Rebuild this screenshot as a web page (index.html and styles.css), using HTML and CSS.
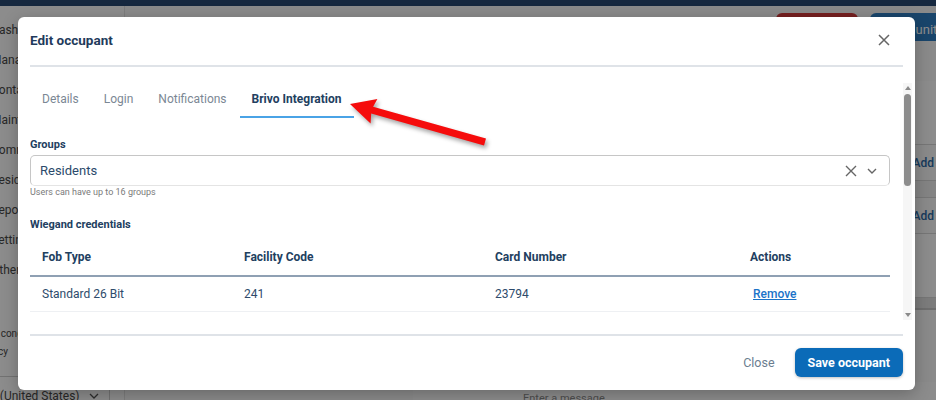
FILE: index.html
```html
<!DOCTYPE html>
<html lang="en">
<head>
  <meta charset="UTF-8" />
  <title>Unit - Edit occupant</title>
  <link rel="stylesheet" href="styles.css">
</head>
<body>

  <div class="page">
    <div class="topbar"></div>
    <div class="page-body">
      <aside class="sidebar">
        <nav class="nav">
          <a>Dashboard</a>
          <a>Management</a>
          <a>Contacts</a>
          <a>Maintenance</a>
          <a>Community</a>
          <a>Residents</a>
          <a>Reports</a>
          <a>Settings</a>
          <a>Other</a>
        </nav>
        <div class="sidebar-links">
          <a>Terms and conditions</a>
          <a class="policy">Privacy policy</a>
        </div>
        <div class="lang-select">
          <span>English (United States)</span>
          <svg width="10" height="6" viewBox="0 0 10 6"><path d="M1 1l4 4 4-4" fill="none" stroke="#555" stroke-width="1.3"/></svg>
        </div>
      </aside>

      <main class="main">
        <div class="toolbar">
          <button class="btn-danger">Delete unit</button>
          <button class="btn-primary">Edit unit codes</button>
        </div>
        <div class="unit-panel">
          <div class="panel-row tall"></div>
          <div class="panel-row"><a class="add-link">Add</a></div>
          <div class="panel-row thin"></div>
          <div class="panel-row"><a class="add-link">Add</a></div>
          <div class="panel-row tall"></div>
          <div class="panel-row band"></div>
        </div>
        <div class="composer">
          <div class="composer-input">Enter a message</div>
        </div>
      </main>
    </div>
  </div>

  <div class="backdrop"></div>

  <div class="modal">
    <div class="modal-header">
      <h2>Edit occupant</h2>
      <button class="icon-btn" aria-label="Close">
        <svg width="12" height="12" viewBox="0 0 12 12"><path d="M1 1l10 10M11 1L1 11" stroke="#666" stroke-width="1.5"/></svg>
      </button>
    </div>

    <div class="modal-body">
      <div class="modal-content">
        <div class="tabs">
          <a class="tab">Details</a>
          <a class="tab">Login</a>
          <a class="tab">Notifications</a>
          <a class="tab active">Brivo Integration</a>
        </div>

        <label class="field-label">Groups</label>
        <div class="select">
          <span class="select-value">Residents</span>
          <span class="select-icons">
            <svg width="12" height="12" viewBox="0 0 12 12"><path d="M1 1l10 10M11 1L1 11" stroke="#666" stroke-width="1.4"/></svg>
            <svg width="10" height="6" viewBox="0 0 10 6"><path d="M1 1l4 4 4-4" fill="none" stroke="#666" stroke-width="1.4"/></svg>
          </span>
        </div>
        <div class="help-text">Users can have up to 16 groups</div>

        <label class="field-label section">Wiegand credentials</label>
        <div class="cred-table">
          <div class="cred-row head">
            <span>Fob Type</span>
            <span>Facility Code</span>
            <span>Card Number</span>
            <span>Actions</span>
          </div>
          <div class="cred-row">
            <span>Standard 26 Bit</span>
            <span>241</span>
            <span>23794</span>
            <span><a class="link">Remove</a></span>
          </div>
        </div>
      </div>

      <div class="scrollbar">
        <span class="arrow-up"></span>
        <span class="thumb"></span>
        <span class="arrow-down"></span>
      </div>
    </div>

    <div class="modal-footer">
      <button class="btn-text">Close</button>
      <button class="btn-save">Save occupant</button>
    </div>
  </div>

  <!-- callout pointing at the Brivo tab -->
  <svg class="callout" width="936" height="400" viewBox="0 0 936 400">
    <polygon points="350,104 377.4,99 373.1,106.8 486,138.6 484,145.4 371.2,113.6 370.6,123.5" fill="#f50c0c"/>
  </svg>

</body>
</html>
```

FILE: styles.css
```css
html, body {
  margin: 0;
  width: 936px;
  height: 400px;
  overflow: hidden;
}
body {
  font-family: Roboto, "Noto Sans", Arial, sans-serif;
  position: relative;
}
button {
  font-family: inherit;
  border: none;
  cursor: pointer;
}

/* page behind the dialog */
.page {
  height: 400px;
  display: flex;
  flex-direction: column;
  background: #fff;
}
.topbar {
  height: 6px;
  background: #284973;
  flex-shrink: 0;
}
.page-body {
  flex: 1;
  display: flex;
  min-height: 0;
}
.sidebar {
  width: 124px;
  border-right: 1px solid #e4e4e4;
  display: flex;
  flex-direction: column;
  overflow: hidden;
}
.nav {
  display: flex;
  flex-direction: column;
  padding-top: 9px;
  margin-left: -9px;
}
.nav a {
  font-size: 12px;
  line-height: 30px;
  color: #4a4a4a;
  white-space: nowrap;
}
.sidebar-links {
  margin-top: auto;
  margin-left: -49px;
  display: flex;
  flex-direction: column;
  padding-bottom: 15px;
}
.sidebar-links a {
  font-size: 10px;
  line-height: 18px;
  color: #4a4a4a;
  white-space: nowrap;
}
.sidebar-links .policy {
  margin-left: -4px;
}
.lang-select {
  border-top: 1px solid #d0d0d0;
  border-right: 1px solid #d0d0d0;
  width: 110px;
  height: 30px;
  display: flex;
  align-items: center;
  justify-content: space-between;
  box-sizing: border-box;
  padding: 8px 10px 0 0;
  margin-bottom: -6px;
}
.lang-select span {
  margin-left: -42px;
  font-size: 12px;
  color: #4a4a4a;
  white-space: nowrap;
}
.main {
  flex: 1;
  display: flex;
  flex-direction: column;
  margin-right: -60px;
  background: #fbfbfb;
}
.toolbar {
  display: flex;
  justify-content: flex-end;
  gap: 12px;
  padding-top: 7px;
}
.toolbar button {
  height: 28px;
  border-radius: 6px;
  color: #fff;
  font-size: 13px;
  padding: 4px 14px 0;
}
.btn-danger {
  width: 82px;
  background: #d53a3a;
}
.btn-primary {
  width: 126px;
  background: #2f7fc4;
}
.unit-panel {
  margin-top: 40px;
  display: flex;
  flex-direction: column;
}
.panel-row {
  height: 35px;
  border-bottom: 1px solid #d7d7d7;
  display: flex;
  align-items: center;
  justify-content: flex-end;
  padding-right: 62px;
}
.panel-row.tall {
  height: 63px;
  background: #fff;
}
.panel-row.thin {
  height: 16px;
  background: #f0f0f0;
}
.panel-row.band {
  height: 10px;
  background: #e2e2e2;
  border-bottom: 2px solid #c9c9c9;
}
.add-link {
  font-size: 12px;
  font-weight: 500;
  color: #2c6aa6;
}
.composer {
  margin-top: auto;
  padding: 0 0 0 288px;
}
.composer-input {
  height: 20px;
  padding: 10px 0 0 110px;
  margin-bottom: -12px;
  background: #fff;
  font-size: 11px;
  color: #8d8d8d;
}

.backdrop {
  position: absolute;
  inset: 0;
  background: rgba(0, 0, 0, 0.45);
}

/* dialog */
.modal {
  position: absolute;
  left: 18px;
  top: 17px;
  width: 897px;
  height: 373px;
  background: #fff;
  border-radius: 6px;
  box-shadow: 0 4px 16px rgba(0, 0, 0, 0.25);
  display: flex;
  flex-direction: column;
}
.modal-header {
  margin: 0 12px;
  border-bottom: 2px solid #dfe3e8;
  display: flex;
  align-items: center;
  justify-content: space-between;
  padding-bottom: 2px;
  box-sizing: border-box;
  height: 50px;
}
.modal-header h2 {
  margin: 0;
  font-size: 13.5px;
  font-weight: 700;
  color: #1f3b5c;
}
.icon-btn {
  width: 24px;
  height: 24px;
  margin-right: 7px;
  background: none;
  display: flex;
  align-items: center;
  justify-content: center;
  padding: 0;
}

.modal-body {
  flex: 1;
  min-height: 0;
  display: flex;
  margin: 0 3px 0 12px;
}
.modal-content {
  flex: 1;
  padding: 12px 13px 0 0;
  overflow: hidden;
  display: flex;
  flex-direction: column;
}
.tabs {
  display: flex;
}
.tab {
  font-size: 12px;
  line-height: 16px;
  padding: 12px 12px 9px;
  color: #7b8794;
  border-bottom: 2px solid transparent;
}
.tab + .tab {
  margin-left: 1px;
}
.tab.active {
  color: #22405f;
  font-weight: 700;
  border-bottom-color: #4aa3e6;
}
.field-label {
  font-size: 11px;
  line-height: 14px;
  font-weight: 700;
  color: #22405f;
  margin-top: 20px;
}
.field-label.section {
  margin-top: 20px;
}
.select {
  margin-top: 3px;
  height: 31px;
  box-sizing: border-box;
  border: 1px solid #c6c6c6;
  border-bottom-color: #e4e4e4;
  border-radius: 5px;
  display: flex;
  align-items: center;
  justify-content: space-between;
  padding: 0 12px 0 9px;
}
.select-value {
  font-size: 13px;
  color: #2b4a6b;
}
.select-icons {
  display: flex;
  align-items: center;
  gap: 10px;
}
.help-text {
  font-size: 9px;
  line-height: 12px;
  color: #7a7a7a;
}
.cred-table {
  margin-top: 7px;
}
.cred-row {
  display: grid;
  grid-template-columns: 202px 251px 255px 1fr;
  height: 34px;
  align-items: center;
  border-bottom: 1px solid #eef0f3;
  font-size: 12px;
  color: #2e4b6b;
}
.cred-row span {
  padding-left: 12px;
}
.cred-row.head {
  height: 36px;
  border-bottom: 2px solid #8fa0b3;
  font-weight: 700;
  color: #22405f;
}
.link {
  color: #1a73c8;
  text-decoration: underline;
  font-weight: 500;
  margin-left: 3px;
}

.scrollbar {
  width: 9px;
  margin: 16px 0 14px;
  background: #f6f6f6;
  display: flex;
  flex-direction: column;
  align-items: center;
}
.arrow-up,
.arrow-down {
  width: 0;
  height: 0;
  border-left: 3.5px solid transparent;
  border-right: 3.5px solid transparent;
  margin: 3px 0;
}
.arrow-up {
  border-bottom: 4px solid #8a8a8a;
}
.arrow-down {
  border-top: 4px solid #8a8a8a;
  margin-top: auto;
}
.thumb {
  width: 7px;
  height: 92px;
  border-radius: 4px;
  background: #8d8d8d;
  margin-top: 1px;
}

.modal-footer {
  margin: 0 12px;
  border-top: 2px solid #dfe3e8;
  padding: 12px 0 13px;
  display: flex;
  justify-content: flex-end;
  align-items: center;
  gap: 12px;
}
.btn-text {
  background: none;
  font-size: 12.5px;
  color: #6b7d8f;
  padding: 0 8px;
  height: 29px;
}
.btn-save {
  height: 29px;
  padding: 0 13px;
  border-radius: 6px;
  background: #0b6bb8;
  color: #fff;
  font-size: 12.5px;
  font-weight: 700;
  box-shadow: 0 1px 3px rgba(0, 0, 0, 0.25);
}

.callout {
  position: absolute;
  left: 0;
  top: 0;
  pointer-events: none;
  filter: drop-shadow(2px 3px 2px rgba(0, 0, 0, 0.35));
}
```
